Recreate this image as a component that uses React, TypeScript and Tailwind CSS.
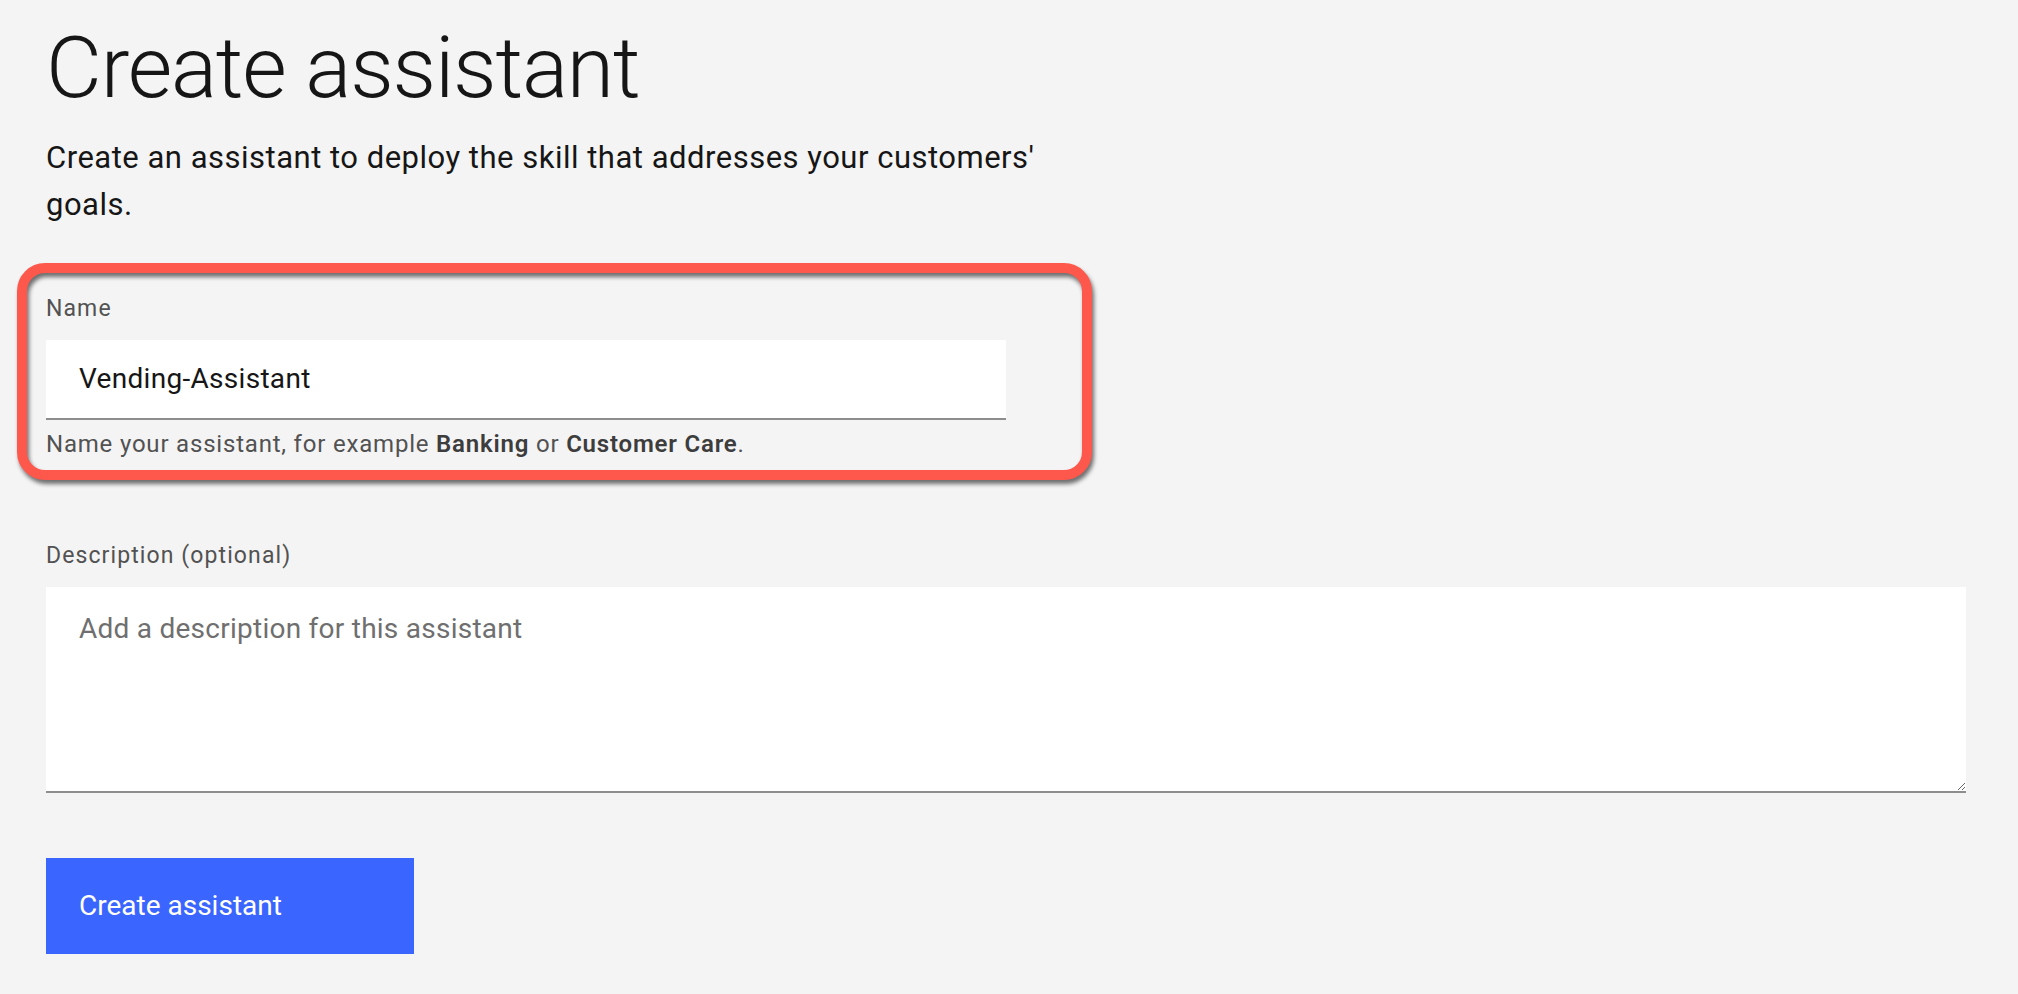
import React from 'react';

export default function App() {
  return (
    <div className="min-h-screen w-full bg-[#f4f4f4] text-[#161616] font-['Roboto',sans-serif]">
      <div className="pl-[46px] pt-[18px]">
        <h1 className="text-[86px] leading-[100px] font-light tracking-[-1.2px]">Create assistant</h1>
        <p className="mt-[16px] max-w-[1040px] text-[31px] leading-[47px] tracking-[0.5px]">
          Create an assistant to deploy the skill that addresses your customers' goals.
        </p>

        {/* Name field, with the red call-out drawn over it */}
        <div className="relative mt-[66px] w-[960px]">
          <div className="pointer-events-none absolute -left-[29px] -top-[31px] h-[217px] w-[1075px] rounded-[28px] border-[10px] border-[#fe584c] drop-shadow-[2px_4px_2px_rgba(0,0,0,0.55)]" />
          <label className="block text-[23px] leading-[30px] tracking-[1.1px] text-[#525252]">Name</label>
          <div className="mt-[16px] flex h-[80px] items-center border-b-2 border-[#8d8d8d] bg-white pl-[33px]">
            <input
              className="w-full bg-transparent text-[28px] tracking-[0.3px] text-[#161616] outline-none"
              defaultValue="Vending-Assistant"
            />
          </div>
          <p className="mt-[9px] text-[24px] leading-[30px] tracking-[0.8px] text-[#525252]">
            Name your assistant, for example <span className="font-semibold text-[#3d3d3d]">Banking</span> or{' '}
            <span className="font-semibold text-[#3d3d3d]">Customer Care</span>.
          </p>
        </div>

        <div className="mt-[82px] w-[1920px]">
          <label className="block text-[23px] leading-[30px] tracking-[1.1px] text-[#525252]">Description (optional)</label>
          <textarea
            className="mt-[16px] block h-[206px] w-full border-b-2 border-[#8d8d8d] bg-white px-[33px] pt-[22px] text-[28px] leading-[40px] tracking-[0.25px] text-[#161616] outline-none placeholder:text-[#6f6f6f]"
            placeholder="Add a description for this assistant"
          />
        </div>

        <button className="mt-[65px] flex h-[96px] w-[368px] items-center bg-[#3a66ff] pl-[33px] text-[28px] text-white">
          Create assistant
        </button>
      </div>
    </div>
  );
}
